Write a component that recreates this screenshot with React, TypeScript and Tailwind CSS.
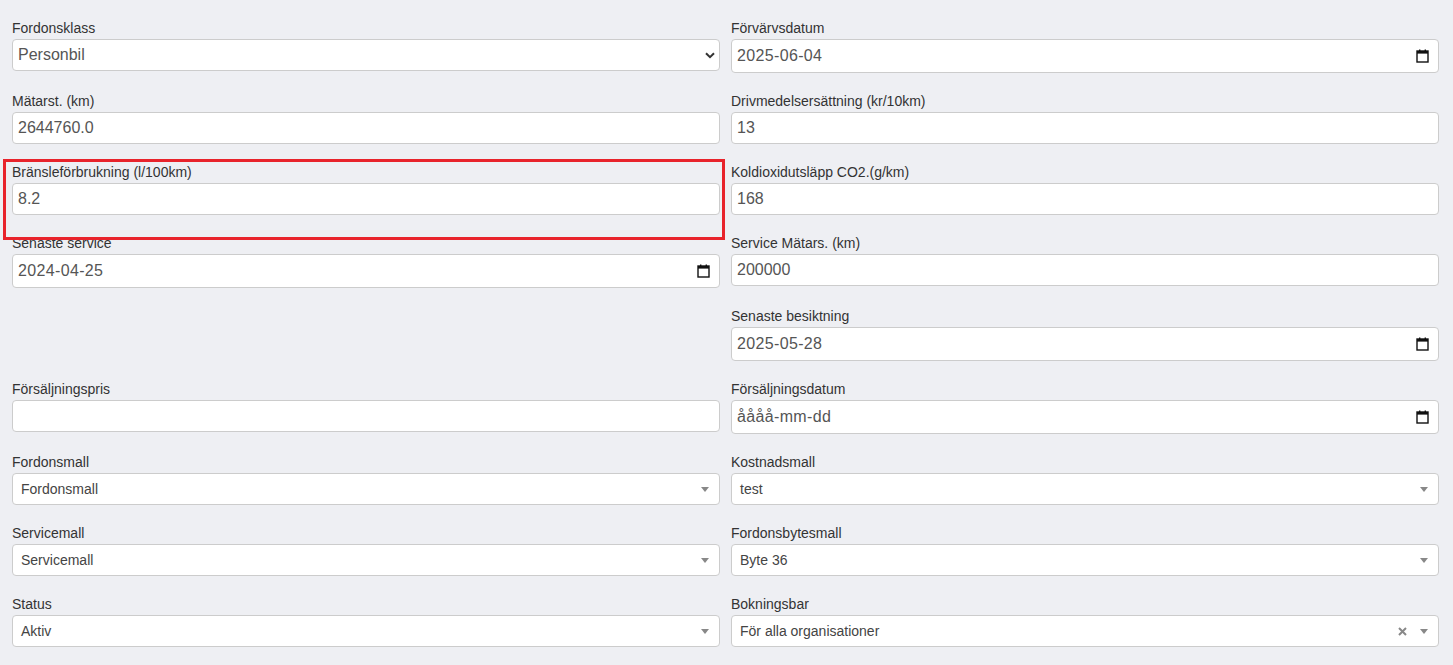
import React from 'react';

const font = "font-['Liberation_Sans',Arial,sans-serif]";

function Label({ children }: { children: React.ReactNode }) {
  return (
    <div className="mb-[2px] h-[18px] text-[14px] leading-[18px] text-[#333333]">
      {children}
    </div>
  );
}

function TextInput({ value }: { value?: string }) {
  return (
    <div className="flex h-[32px] items-center rounded-[4px] border border-[#cccccc] bg-white px-[5px] text-[16px] text-[#555555]">
      {value}
    </div>
  );
}

function CalendarIcon() {
  return (
    <svg width="13" height="14" viewBox="0 0 13 14" className="shrink-0">
      <rect x="1" y="2" width="11" height="11" fill="none" stroke="#111" strokeWidth="1.4" />
      <rect x="1" y="2" width="11" height="2.6" fill="#111" />
      <rect x="3" y="0.5" width="1.4" height="2" fill="#111" />
      <rect x="8.6" y="0.5" width="1.4" height="2" fill="#111" />
    </svg>
  );
}

function DateInput({ value, placeholder }: { value?: string; placeholder?: string }) {
  return (
    <div className="flex h-[34px] items-center justify-between rounded-[4px] border border-[#cccccc] bg-white pl-[5px] pr-[9px] text-[16px] tracking-[0.35px] text-[#555555]">
      <span>{value ?? placeholder}</span>
      <CalendarIcon />
    </div>
  );
}

function NativeSelect({ value }: { value: string }) {
  return (
    <div className="flex h-[32px] items-center justify-between rounded-[4px] border border-[#cccccc] bg-white pl-[5px] pr-[4px] text-[16px] text-[#555555]">
      <span>{value}</span>
      <svg width="10" height="7" viewBox="0 0 10 7">
        <path d="M1 1.2 L5 5.2 L9 1.2" fill="none" stroke="#333" strokeWidth="2" />
      </svg>
    </div>
  );
}

function Select2({ value, clearable }: { value: string; clearable?: boolean }) {
  return (
    <div className="flex h-[32px] items-center justify-between rounded-[4px] border border-[#cccccc] bg-white pl-[8px] pr-[10px] text-[14px] text-[#444444]">
      <span>{value}</span>
      <div className="flex items-center gap-[13px]">
        {clearable && (
          <svg width="9" height="9" viewBox="0 0 9 9">
            <path d="M1 1 L8 8 M8 1 L1 8" stroke="#888" strokeWidth="2" />
          </svg>
        )}
        <div className="h-0 w-0 border-x-[4px] border-t-[5px] border-x-transparent border-t-[#888888]" />
      </div>
    </div>
  );
}

export default function App() {
  return (
    <div className={`min-h-screen bg-[#eeeff3] ${font}`}>
      <div className="grid grid-cols-2 gap-x-[11px] gap-y-[19px] pl-[12px] pr-[14px] pt-[19px] pb-[20px]">
        <div>
          <Label>Fordonsklass</Label>
          <NativeSelect value="Personbil" />
        </div>
        <div>
          <Label>Förvärvsdatum</Label>
          <DateInput value="2025-06-04" />
        </div>

        <div>
          <Label>Mätarst. (km)</Label>
          <TextInput value="2644760.0" />
        </div>
        <div>
          <Label>Drivmedelsersättning (kr/10km)</Label>
          <TextInput value="13" />
        </div>

        <div className="relative">
          {/* markerad ruta */}
          <div className="pointer-events-none absolute -left-[9px] -right-[5px] -top-[4px] -bottom-[25px] border-[3px] border-[#e8232b]" />
          <Label>Bränsleförbrukning (l/100km)</Label>
          <TextInput value="8.2" />
        </div>
        <div>
          <Label>Koldioxidutsläpp CO2.(g/km)</Label>
          <TextInput value="168" />
        </div>

        <div>
          <Label>Senaste service</Label>
          <DateInput value="2024-04-25" />
        </div>
        <div>
          <Label>Service Mätars. (km)</Label>
          <TextInput value="200000" />
        </div>

        <div />
        <div>
          <Label>Senaste besiktning</Label>
          <DateInput value="2025-05-28" />
        </div>

        <div>
          <Label>Försäljningspris</Label>
          <TextInput />
        </div>
        <div>
          <Label>Försäljningsdatum</Label>
          <DateInput placeholder="åååå-mm-dd" />
        </div>

        <div>
          <Label>Fordonsmall</Label>
          <Select2 value="Fordonsmall" />
        </div>
        <div>
          <Label>Kostnadsmall</Label>
          <Select2 value="test" />
        </div>

        <div>
          <Label>Servicemall</Label>
          <Select2 value="Servicemall" />
        </div>
        <div>
          <Label>Fordonsbytesmall</Label>
          <Select2 value="Byte 36" />
        </div>

        <div>
          <Label>Status</Label>
          <Select2 value="Aktiv" />
        </div>
        <div>
          <Label>Bokningsbar</Label>
          <Select2 value="För alla organisationer" clearable />
        </div>
      </div>
    </div>
  );
}
